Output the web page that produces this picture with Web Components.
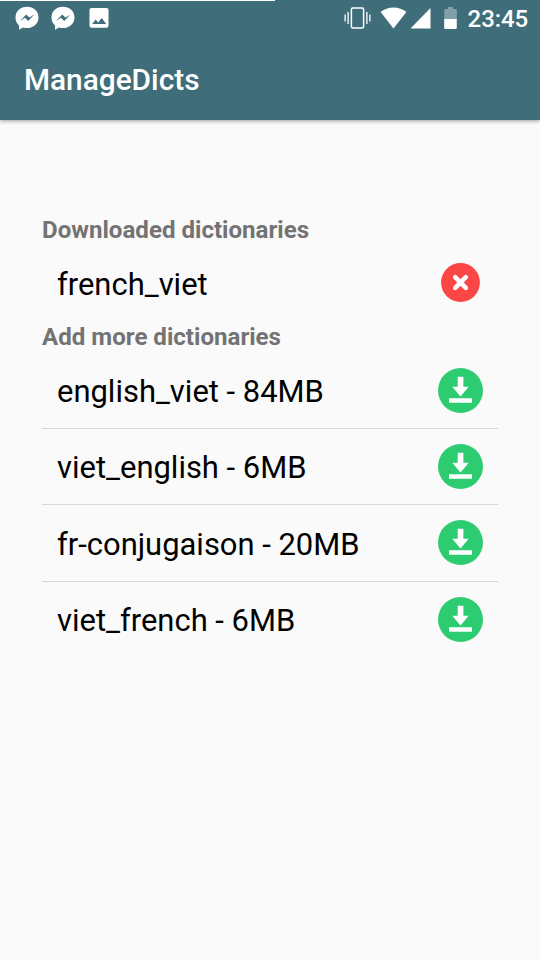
<!DOCTYPE html>
<html lang="en">
<head>
<meta charset="utf-8">
<title>ManageDicts</title>
<style>
  html, body {
    margin: 0;
    height: 100%;
  }

  body {
    background: #fafafa;
    font-family: Roboto, "Liberation Sans", sans-serif;
    overflow: hidden;
  }
</style>
</head>
<body>
<manage-screen></manage-screen>

<script>
const define = (name, html) => {
  const template = document.createElement('template');
  template.innerHTML = html;

  window.customElements.define(name, class extends HTMLElement {
    constructor() {
      super();

      this._shadowRoot = this.attachShadow({ mode: 'open' });
      this._shadowRoot.appendChild(template.content.cloneNode(true));
    }
  });
};

define('messenger-icon', `
  <style>
    :host { display: block; width: 24px; height: 24px; }
    svg { display: block; }
  </style>
  <svg width="24" height="24" viewBox="0 0 24 24">
    <path fill="#fff" d="M12 .8C5.500.8.500 5.300.500 11.400c0 3.100 1.300 6 3.500 8v4.400l4.200-2.400c1.200.4 2.500.6 3.800.6 6.500 0 11.500-4.500 11.500-10.600S18.500.8 12 .8z"/>
    <path fill="#3f6e7a" d="M5 14.900l6.200-6.500 3.200 3.200 5-3.200-6.200 6.500-3.200-3.200z"/>
  </svg>
`);

define('status-bar', `
  <style>
    :host {
      display: flex;
      align-items: center;
      box-sizing: border-box;
      height: 36px;
      padding: 0 12px 0 15px;
      color: #fff;
      /* thin progress line along the top edge */
      background: linear-gradient(#fff, #fff) 0 0 / 275px 1px no-repeat;
    }

    .group { display: flex; align-items: center; }
    .left { gap: 12px; flex: 1; }
    svg { display: block; }
    .wifi { margin-left: 9px; }
    .cell { margin-left: 3px; }
    .battery { margin-left: 13px; }

    .clock {
      margin-left: 11px;
      font-size: 24px;
      line-height: 36px;
      font-weight: 500;
      padding-top: 1px;
      letter-spacing: -0.1px;
    }
  </style>

  <div class="group left">
    <messenger-icon></messenger-icon>
    <messenger-icon></messenger-icon>
    <svg width="24" height="24" viewBox="0 0 24 24">
      <path fill="#fff" fill-rule="evenodd" d="M4.500 2h15a2 2 0 0 1 2 2v15.700a2 2 0 0 1-2 2h-15a2 2 0 0 1-2-2V4a2 2 0 0 1 2-2zM5.200 18h14l-4.500-6-3.500 4.500-2.500-3z"/>
    </svg>
  </div>

  <div class="group">
    <svg width="27" height="24" viewBox="0 0 27 24">
      <rect x="7.400" y="2" width="12.200" height="20" rx="1.500" fill="none" stroke="#fff" stroke-width="1.500"/>
      <path fill="none" stroke="#fff" stroke-width="1.300" d="M4.100 6v12M1.100 8.500v7M22.900 6v12M25.900 8.500v7"/>
    </svg>
    <svg class="wifi" width="27" height="22" viewBox="0 0 27 22">
      <path fill="#fff" d="M13.500 21.500L.6 5.100C4.300 2.200 8.700.6 13.500.6s9.200 1.600 12.900 4.500z"/>
    </svg>
    <svg class="cell" width="21" height="22" viewBox="0 0 21 22">
      <path fill="#fff" d="M20.500.9v20.600H.5z"/>
    </svg>
    <svg class="battery" width="13" height="24" viewBox="0 0 13 24">
      <path fill="#fff" fill-opacity=".35" d="M4 1h5v2h2.500a1.300 1.300 0 0 1 1.300 1.300V13H.2V4.300A1.300 1.300 0 0 1 1.500 3H4z"/>
      <path fill="#fff" d="M.2 13h12.600v8.700a1.300 1.300 0 0 1-1.300 1.300h-10A1.300 1.300 0 0 1 .2 21.700z"/>
    </svg>
    <span class="clock">23:45</span>
  </div>
`);

define('app-header', `
  <style>
    :host {
      display: block;
      height: 120px;
      background: #3f6e7a;
      box-shadow: 0 1px 4px rgba(60, 40, 30, 0.45);
    }

    h1 {
      margin: 0;
      padding: 2px 0 0 24px;
      color: #fff;
      font-size: 29.800px;
      line-height: 84px;
      font-weight: 500;
    }
  </style>

  <status-bar></status-bar>
  <h1><slot></slot></h1>
`);

define('dict-section', `
  <style>
    :host { display: block; }

    h2 {
      box-sizing: border-box;
      height: 31px;
      margin: 0;
      padding-top: 1px;
      color: #737373;
      font-size: 24.100px;
      line-height: 31px;
      font-weight: bold;
    }
  </style>

  <h2><slot name="title"></slot></h2>
  <slot></slot>
`);

define('dict-row', `
  <style>
    :host {
      display: flex;
      align-items: center;
      justify-content: space-between;
      box-sizing: border-box;
      height: 76.400px;
      padding: 0 15px;
      color: #000;
      font-size: 30.950px;
      line-height: 38px;
      border-bottom: 1px solid transparent;
    }

    :host([divider]) { border-bottom-color: #d8d8d8; }
    .name { padding-top: 4px; white-space: nowrap; }
  </style>

  <span class="name"><slot></slot></span>
  <slot name="action"></slot>
`);

define('remove-button', `
  <style>
    :host { display: block; width: 39px; height: 39px; margin-right: 3px; }
    svg { display: block; }
  </style>
  <svg width="39" height="39" viewBox="0 0 39 39">
    <circle cx="19.500" cy="19.500" r="19.400" fill="#fc4545"/>
    <path stroke="#fff" stroke-width="4.600" stroke-linecap="round" d="M14.200 14.200l10.600 10.600M24.800 14.200L14.200 24.800"/>
  </svg>
`);

define('download-button', `
  <style>
    :host { display: block; width: 45px; height: 45px; }
    svg { display: block; }
  </style>
  <svg width="45" height="45" viewBox="0 0 45 45">
    <circle cx="22.500" cy="22.500" r="22.500" fill="#2ecc71"/>
    <path fill="#fff" d="M19.700 8.700h5.700v10h5.300l-8.200 9.800-8.200-9.800h5.400zM11 30.200h23v4.500H11z"/>
  </svg>
`);

define('manage-screen', `
  <style>
    :host { display: block; }
    main { padding: 94px 42px 0; }
  </style>

  <app-header>ManageDicts</app-header>
  <main>
    <dict-section>
      <span slot="title">Downloaded dictionaries</span>
      <dict-row>french_viet<remove-button slot="action"></remove-button></dict-row>
    </dict-section>
    <dict-section>
      <span slot="title">Add more dictionaries</span>
      <dict-row divider>english_viet - 84MB<download-button slot="action"></download-button></dict-row>
      <dict-row divider>viet_english - 6MB<download-button slot="action"></download-button></dict-row>
      <dict-row divider>fr-conjugaison - 20MB<download-button slot="action"></download-button></dict-row>
      <dict-row>viet_french - 6MB<download-button slot="action"></download-button></dict-row>
    </dict-section>
  </main>
`);
</script>
</body>
</html>
